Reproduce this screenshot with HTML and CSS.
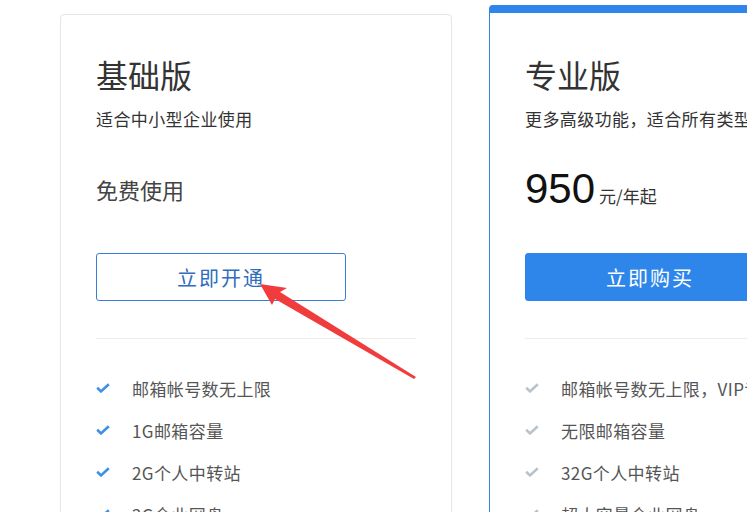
FILE: index.html
```html
<!DOCTYPE html>
<html lang="zh-CN">
<head>
    <meta charset="UTF-8">
    <meta name="viewport" content="width=device-width, initial-scale=1.0">
    <title>企业邮箱 - 版本选择</title>
    <link rel="stylesheet" href="styles.css">
</head>
<body>
    <div class="plans">
        <div class="plan">
            <h2 class="plan-title">基础版</h2>
            <p class="plan-desc">适合中小型企业使用</p>
            <div class="plan-price free">免费使用</div>
            <button class="btn btn-outline">立即开通</button>
            <div class="divider"></div>
            <ul class="features">
                <li><svg class="check" viewBox="0 0 14 10"><polyline points="1.2,4.8 5,8.4 12.8,1.2"/></svg>邮箱帐号数无上限</li>
                <li><svg class="check" viewBox="0 0 14 10"><polyline points="1.2,4.8 5,8.4 12.8,1.2"/></svg>1G邮箱容量</li>
                <li><svg class="check" viewBox="0 0 14 10"><polyline points="1.2,4.8 5,8.4 12.8,1.2"/></svg>2G个人中转站</li>
                <li><svg class="check" viewBox="0 0 14 10"><polyline points="1.2,4.8 5,8.4 12.8,1.2"/></svg>2G企业网盘</li>
            </ul>
        </div>

        <div class="plan pro">
            <h2 class="plan-title">专业版</h2>
            <p class="plan-desc">更多高级功能，适合所有类型企业使用</p>
            <div class="plan-price"><span class="amount">950</span><span class="unit">元/年起</span></div>
            <button class="btn btn-primary">立即购买</button>
            <div class="divider"></div>
            <ul class="features">
                <li><svg class="check" viewBox="0 0 14 10"><polyline points="1.2,4.8 5,8.4 12.8,1.2"/></svg>邮箱帐号数无上限，VIP专属服务</li>
                <li><svg class="check" viewBox="0 0 14 10"><polyline points="1.2,4.8 5,8.4 12.8,1.2"/></svg>无限邮箱容量</li>
                <li><svg class="check" viewBox="0 0 14 10"><polyline points="1.2,4.8 5,8.4 12.8,1.2"/></svg>32G个人中转站</li>
                <li><svg class="check" viewBox="0 0 14 10"><polyline points="1.2,4.8 5,8.4 12.8,1.2"/></svg>超大容量企业网盘</li>
            </ul>
        </div>
    </div>

    <!-- annotation arrow -->
    <svg class="arrow" viewBox="0 0 747 512">
        <polygon points="260,284 287,288 280,292 416,377 414,379 275,299 272,305"/>
    </svg>
</body>
</html>
```

FILE: styles.css
```css
* {
    margin: 0;
    padding: 0;
    box-sizing: border-box;
}

body {
    background: #fff;
    font-family: "Noto Sans CJK SC", "Liberation Sans", sans-serif;
    color: #333;
    overflow: hidden;
    width: 747px;
    height: 512px;
    position: relative;
}

.plans {
    display: flex;
    align-items: flex-start;
    gap: 37px;
    padding: 14px 0 0 60px;
    width: 1000px;
}

.plan {
    flex: 0 0 392px;
    height: 580px;
    border: 1px solid #e6e6e6;
    border-radius: 4px;
    padding: 39px 35px 0 35px;
}

.plan.pro {
    margin-top: -9px;
    border-color: #2e86ea;
    border-top-width: 8px;
    padding-top: 41px;
}

.plan-title {
    font-size: 32px;
    font-weight: normal;
    line-height: 40px;
    color: #333;
}

.plan-desc {
    margin-top: 13px;
    font-size: 17px;
    line-height: 24px;
    letter-spacing: 0.4px;
    color: #333;
    white-space: nowrap;
}

.plan-price {
    margin-top: 43px;
    height: 30px;
    line-height: 30px;
    font-size: 22px;
    color: #444;
    white-space: nowrap;
}

.plan-price .amount {
    font-family: "Liberation Sans", sans-serif;
    font-size: 42px;
    color: #111;
}

.plan-price .unit {
    font-size: 17px;
    color: #333;
    margin-left: 4px;
}

.btn {
    display: block;
    margin-top: 49px;
    width: 250px;
    height: 48px;
    border-radius: 3px;
    font-family: inherit;
    font-size: 20px;
    letter-spacing: 2px;
    cursor: pointer;
}

.btn-outline {
    background: #fff;
    border: 1px solid #3a7fd5;
    color: #2f6dbd;
}

.btn-primary {
    background: #2e86ea;
    border: 1px solid #2e86ea;
    color: #fff;
}

.divider {
    margin-top: 37px;
    height: 1px;
    background: #ececec;
}

.features {
    list-style: none;
    padding-top: 28px;
}

.features li {
    display: flex;
    align-items: center;
    height: 42px;
    font-size: 17px;
    letter-spacing: 0.4px;
    color: #555;
    white-space: nowrap;
}

.check {
    width: 14px;
    height: 10px;
    margin-right: 22px;
    flex: none;
}

.check polyline {
    fill: none;
    stroke: #3d8fe8;
    stroke-width: 2.6;
}

.pro .check polyline {
    stroke: #b9c3cd;
}

.arrow {
    position: absolute;
    left: 0;
    top: 0;
    width: 747px;
    height: 512px;
    pointer-events: none;
}

.arrow polygon {
    fill: #f03c3c;
}
```
